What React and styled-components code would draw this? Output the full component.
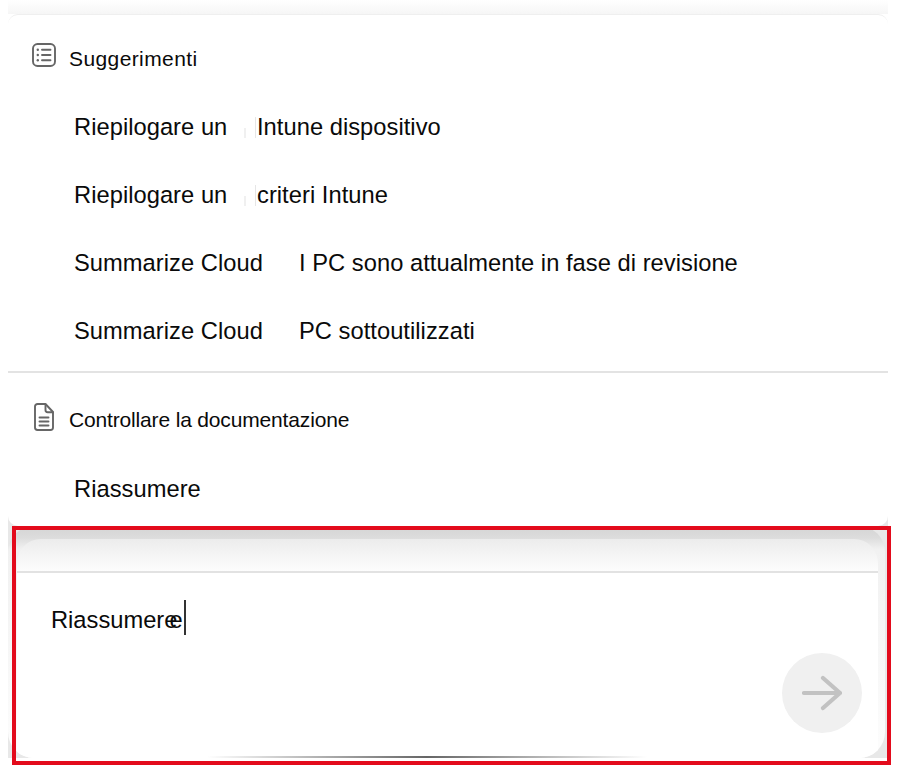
import React from "react";
import styled, { createGlobalStyle } from "styled-components";

const Global = createGlobalStyle`
  html, body { margin: 0; padding: 0; background: #fff; }
  body { font-family: "Liberation Sans", Arial, sans-serif; color: #0a0a0a; }
`;
const Page = styled.div`
  width: 900px; height: 774px; position: relative; overflow: hidden; background: #fff;
`;
const TopFade = styled.div`
  height: 14px; margin: 0 12px 0 8px;
  background: linear-gradient(to bottom, #ffffff, #f6f6f6);
`;
const Shell = styled.div`
  margin: 0 12px 0 8px;
  background: linear-gradient(to bottom, transparent 500px, #e8e8e8 500px);
`;
const Card = styled.section`
  height: 512px; background: #fff;
  border-radius: 10px; border-top: 1px solid #efefef; box-sizing: border-box;
  display: flex; flex-direction: column;
`;
const Section = styled.div`
  display: flex; flex-direction: column; height: ${p => p.$h}px; box-sizing: border-box;
  border-bottom: ${p => (p.$divider ? "2px solid #e3e3e3" : "none")};
`;
const SectionHead = styled.div`
  display: flex; align-items: flex-start; gap: ${p => p.$gap}px;
  height: 30px; margin-top: ${p => p.$top}px; padding-left: ${p => p.$left}px;
`;
const HeadLabel = styled.span`
  font-size: 21px; line-height: 30px; white-space: nowrap;
  margin-top: ${p => p.$nudge}px; letter-spacing: ${p => p.$track}px;
`;
const SuggestionList = styled.div`
  display: flex; flex-direction: column; margin-top: ${p => p.$top}px;
`;
const Suggestion = styled.div`
  height: 68px; display: flex; align-items: center; padding-left: 66px;
  font-size: 23.7px; letter-spacing: 0.04px; white-space: nowrap;
`;
const Part = styled.span`
  display: inline-block; width: ${p => p.$w}px; flex: none; position: relative;
`;
const Seams = styled.span`
  position: absolute; left: 170px; top: 3px; width: 12px; height: 21px;
  &::before {
    content: ""; position: absolute; left: 0; bottom: 0; width: 2px; height: 10px; background: #f0f0f0;
  }
  &::after {
    content: ""; position: absolute; right: 0; top: 0; width: 1px; height: 21px; background: #e6e6e6;
  }
`;
const Composer = styled.div`
  height: 232px; display: flex;
`;
const Panel = styled.div`
  flex: 1; margin-right: 3px; overflow: hidden; border-radius: 26px;
  background: linear-gradient(to bottom, #d4d4d4, #dcdcdc 5%, #f1f1f1 10%, #f6f6f6 50%, #fdfdfd);
  padding: 13px 7px 0 9px; display: flex; flex-direction: column;
`;
const PanelHead = styled.div`
  height: 32px; flex: none; border-radius: 24px 24px 0 0;
  background: linear-gradient(to bottom, #ececec, #fdfdfd);
  border-bottom: 2px solid #e2e2e2;
`;
const PanelBody = styled.div`
  flex: 1; padding: 30px 0 0 34px; position: relative; background: #fff;
`;
const Input = styled.div`
  display: flex; align-items: center; font-size: 23.7px; height: 35px; white-space: nowrap;
`;
const Ghost = styled.span`
  margin-left: -8px;
`;
const Caret = styled.span`
  width: 2px; height: 35px; background: #333; margin: -6px 0 0 1px;
`;
const SendButton = styled.button`
  position: absolute; right: 16px; bottom: 25px; width: 80px; height: 80px; border-radius: 50%;
  border: none; background: #f0f0f0; display: flex; align-items: center; justify-content: center; padding: 0;
`;
const HomeBar = styled.div`
  position: absolute; left: 190px; bottom: 0; width: 440px; height: 2px;
  background: linear-gradient(to right, transparent, #666 50%, transparent);
`;
const RedFrame = styled.div`
  position: absolute; left: 12px; top: 526px; width: 879px; height: 239px;
  border: 4px solid #e30b1c; box-sizing: border-box; pointer-events: none;
`;

const ListIcon = () => (
  <svg width="24" height="24" viewBox="0 0 24 24" fill="none" stroke="#666" strokeWidth="1.9" strokeLinecap="round">
    <rect x="1" y="1" width="22" height="22" rx="4.5" />
    <path d="M10 6.7h8.5M10 12h8.5M10 17.3h8.5" />
    <circle cx="5.8" cy="6.7" r="1.2" fill="#666" stroke="none" />
    <circle cx="5.8" cy="12" r="1.2" fill="#666" stroke="none" />
    <circle cx="5.8" cy="17.3" r="1.2" fill="#666" stroke="none" />
  </svg>
);
const DocIcon = () => (
  <svg width="20" height="28" viewBox="0 0 20 28" fill="none" stroke="#666" strokeWidth="1.9" strokeLinecap="round" strokeLinejoin="round">
    <path d="M3.5 1h8l7.5 8v15.5a2.5 2.5 0 0 1-2.5 2.5h-13A2.5 2.5 0 0 1 1 24.500V3.500A2.500 2.500 0 0 1 3.500 1z" />
    <path d="M11.500 1.500V7a2.200 2.200 0 0 0 2.200 2.200h5" />
    <path d="M5.500 14.500h9M5.500 18.500h9M5.500 22.500h9" />
  </svg>
);
const ArrowIcon = () => (
  <svg width="40" height="36" viewBox="0 0 40 36" fill="none" stroke="#c2c2c2" strokeWidth="4.2" strokeLinecap="round" strokeLinejoin="round">
    <path d="M2 18h36M21 3l17 15-17 15" />
  </svg>
);

export default function App() {
  return (
    <Page>
      <Global />
      <TopFade />
      <Shell>
        <Card>
          <Section $h={358} $divider>
            <SectionHead $top={28} $left={24} $gap={13}>
              <ListIcon />
              <HeadLabel $nudge={1} $track={0.4}>Suggerimenti</HeadLabel>
            </SectionHead>
            <SuggestionList $top={20}>
              <Suggestion><Part $w={183}>Riepilogare un<Seams /></Part>Intune dispositivo</Suggestion>
              <Suggestion><Part $w={183}>Riepilogare un<Seams /></Part>criteri Intune</Suggestion>
              <Suggestion><Part $w={225}>Summarize Cloud</Part>I PC sono attualmente in fase di revisione</Suggestion>
              <Suggestion><Part $w={225}>Summarize Cloud</Part>PC sottoutilizzati</Suggestion>
            </SuggestionList>
          </Section>
          <Section $h={152}>
            <SectionHead $top={30} $left={26} $gap={15}>
              <DocIcon />
              <HeadLabel $nudge={2} $track={-0.16}>Controllare la documentazione</HeadLabel>
            </SectionHead>
            <SuggestionList $top={22}>
              <Suggestion>Riassumere</Suggestion>
            </SuggestionList>
          </Section>
        </Card>
        <Composer>
          <Panel>
            <PanelHead />
            <PanelBody>
              <Input>Riassumere<Ghost>e</Ghost><Caret /></Input>
              <SendButton aria-label="Invia"><ArrowIcon /></SendButton>
              <HomeBar />
            </PanelBody>
          </Panel>
        </Composer>
      </Shell>
      <RedFrame />
    </Page>
  );
}
